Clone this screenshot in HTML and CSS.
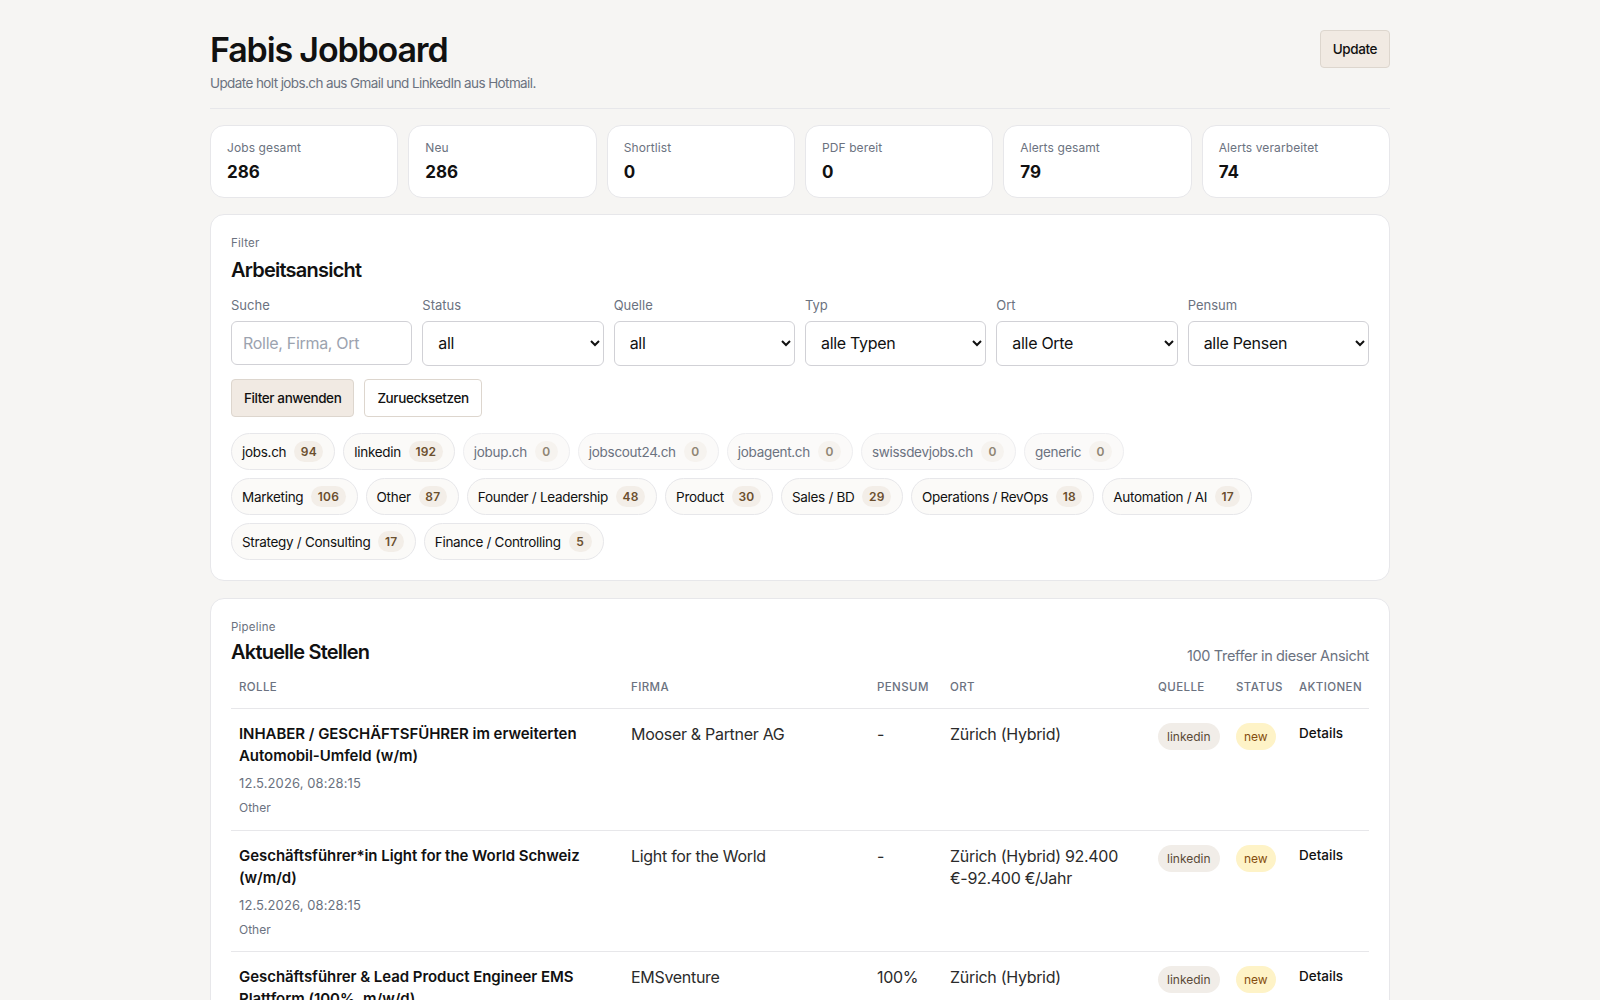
FILE: index.html
```html
<!DOCTYPE html>
<html lang="de">
<head>
  <meta charset="UTF-8">
  <title>Fabis Jobboard</title>
  <link rel="stylesheet" href="styles.css">
</head>
<body>
  <div class="container">
    <header class="header">
      <div>
        <h1>Fabis Jobboard</h1>
        <p class="subtitle">Update holt jobs.ch aus Gmail und LinkedIn aus Hotmail.</p>
      </div>
      <button class="btn btn-primary">Update</button>
    </header>

    <section class="stats">
      <div class="stat"><span class="stat-label">Jobs gesamt</span><strong class="stat-value">286</strong></div>
      <div class="stat"><span class="stat-label">Neu</span><strong class="stat-value">286</strong></div>
      <div class="stat"><span class="stat-label">Shortlist</span><strong class="stat-value">0</strong></div>
      <div class="stat"><span class="stat-label">PDF bereit</span><strong class="stat-value">0</strong></div>
      <div class="stat"><span class="stat-label">Alerts gesamt</span><strong class="stat-value">79</strong></div>
      <div class="stat"><span class="stat-label">Alerts verarbeitet</span><strong class="stat-value">74</strong></div>
    </section>

    <section class="panel">
      <div class="eyebrow">Filter</div>
      <h2>Arbeitsansicht</h2>
      <form class="filters">
        <label class="field">Suche<input type="text" placeholder="Rolle, Firma, Ort"></label>
        <label class="field">Status<select><option>all</option></select></label>
        <label class="field">Quelle<select><option>all</option></select></label>
        <label class="field">Typ<select><option>alle Typen</option></select></label>
        <label class="field">Ort<select><option>alle Orte</option></select></label>
        <label class="field">Pensum<select><option>alle Pensen</option></select></label>
      </form>
      <div class="actions">
        <button class="btn btn-primary">Filter anwenden</button>
        <button class="btn">Zuruecksetzen</button>
      </div>
      <div class="chips">
        <a class="chip">jobs.ch <b>94</b></a>
        <a class="chip">linkedin <b>192</b></a>
        <a class="chip empty">jobup.ch <b>0</b></a>
        <a class="chip empty">jobscout24.ch <b>0</b></a>
        <a class="chip empty">jobagent.ch <b>0</b></a>
        <a class="chip empty">swissdevjobs.ch <b>0</b></a>
        <a class="chip empty">generic <b>0</b></a>
      </div>
      <div class="chips">
        <a class="chip">Marketing <b>106</b></a>
        <a class="chip">Other <b>87</b></a>
        <a class="chip">Founder / Leadership <b>48</b></a>
        <a class="chip">Product <b>30</b></a>
        <a class="chip">Sales / BD <b>29</b></a>
        <a class="chip">Operations / RevOps <b>18</b></a>
        <a class="chip">Automation / AI <b>17</b></a>
      </div>
      <div class="chips">
        <a class="chip">Strategy / Consulting <b>17</b></a>
        <a class="chip">Finance / Controlling <b>5</b></a>
      </div>
    </section>

    <section class="panel">
      <div class="eyebrow">Pipeline</div>
      <div class="panel-head">
        <h2>Aktuelle Stellen</h2>
        <span class="count">100 Treffer in dieser Ansicht</span>
      </div>
      <table class="jobs">
        <thead>
          <tr>
            <th class="col-role">Rolle</th>
            <th class="col-company">Firma</th>
            <th class="col-load">Pensum</th>
            <th class="col-place">Ort</th>
            <th class="col-source">Quelle</th>
            <th class="col-status">Status</th>
            <th>Aktionen</th>
          </tr>
        </thead>
        <tbody>
          <tr>
            <td>
              <div class="role">INHABER / GESCHÄFTSFÜHRER im erweiterten Automobil-Umfeld (w/m)</div>
              <div class="date">12.5.2026, 08:28:15</div>
              <div class="type">Other</div>
            </td>
            <td>Mooser &amp; Partner AG</td>
            <td>-</td>
            <td>Zürich (Hybrid)</td>
            <td><span class="tag">linkedin</span></td>
            <td><span class="tag tag-new">new</span></td>
            <td><a class="details">Details</a></td>
          </tr>
          <tr>
            <td>
              <div class="role">Geschäftsführer*in Light for the World Schweiz (w/m/d)</div>
              <div class="date">12.5.2026, 08:28:15</div>
              <div class="type">Other</div>
            </td>
            <td>Light for the World</td>
            <td>-</td>
            <td>Zürich (Hybrid) 92.400 €-92.400 €/Jahr</td>
            <td><span class="tag">linkedin</span></td>
            <td><span class="tag tag-new">new</span></td>
            <td><a class="details">Details</a></td>
          </tr>
          <tr>
            <td>
              <div class="role">Geschäftsführer &amp; Lead Product Engineer EMS Plattform (100%, m/w/d)</div>
              <div class="date">12.5.2026, 08:28:15</div>
              <div class="type">Other</div>
            </td>
            <td>EMSventure</td>
            <td>100%</td>
            <td>Zürich (Hybrid)</td>
            <td><span class="tag">linkedin</span></td>
            <td><span class="tag tag-new">new</span></td>
            <td><a class="details">Details</a></td>
          </tr>
        </tbody>
      </table>
    </section>
  </div>
</body>
</html>
```

FILE: styles.css
```css
:root {
  --bg: #f6f5f3;
  --line: #e7e7ea;
  --text: #111111;
  --muted: #6b7280;
  --accent: #f1eae3;
  --accent-line: #ddd6ce;
}

* {
  margin: 0;
  padding: 0;
  box-sizing: border-box;
}

html, body {
  height: 100%;
  overflow: hidden;
}

body {
  font-family: Inter, "Noto Sans", sans-serif;
  background: var(--bg);
  color: var(--text);
}

.container {
  width: 1180px;
  margin: 0 auto;
  padding-top: 30px;
}

.header {
  display: flex;
  justify-content: space-between;
  align-items: flex-start;
  height: 79px;
  border-bottom: 1px solid var(--line);
  margin-bottom: 16px;
}

h1 {
  font-size: 34px;
  line-height: 40px;
  font-weight: 600;
  letter-spacing: -1.15px;
}

.subtitle {
  font-size: 13.5px;
  line-height: 20px;
  letter-spacing: -0.6px;
  color: var(--muted);
  margin-top: 3px;
}

.btn {
  font-family: inherit;
  font-size: 13.5px;
  font-weight: 500;
  letter-spacing: -0.4px;
  height: 38px;
  padding: 0 12px;
  border: 1px solid var(--accent-line);
  border-radius: 4px;
  background: #fff;
  color: var(--text);
  cursor: pointer;
}

.btn-primary {
  background: var(--accent);
}

.stats {
  display: grid;
  grid-template-columns: repeat(6, 1fr);
  gap: 10px;
  margin-bottom: 16px;
}

.stat {
  height: 73px;
  padding: 14px 16px;
  background: #fff;
  border: 1px solid var(--line);
  border-radius: 14px;
}

.stat-label {
  display: block;
  font-size: 12px;
  line-height: 16px;
  letter-spacing: 0.1px;
  color: var(--muted);
}

.stat-value {
  display: block;
  font-size: 17px;
  line-height: 24px;
  font-weight: 700;
  margin-top: 4px;
}

.panel {
  background: #fff;
  border: 1px solid var(--line);
  border-radius: 14px;
  padding: 20px;
  margin-bottom: 17px;
}

.eyebrow {
  font-size: 11.5px;
  line-height: 16px;
  letter-spacing: 0.2px;
  color: var(--muted);
}

h2 {
  font-size: 20px;
  line-height: 28px;
  font-weight: 600;
  letter-spacing: -0.77px;
  margin-top: 5px;
}

.filters {
  display: grid;
  grid-template-columns: repeat(6, 1fr);
  gap: 10px;
  margin-top: 13px;
}

.field {
  display: flex;
  flex-direction: column;
  gap: 8px;
  font-size: 13px;
  line-height: 16px;
  color: var(--muted);
}

.field input,
.field select {
  width: 100%;
  font-family: inherit;
  font-size: 16px;
  letter-spacing: -0.3px;
  color: var(--text);
  background: #fff;
  border: 1px solid #d1d1d6;
  border-radius: 6px;
}

.field input {
  height: 44px;
  padding: 0 11px;
}

.field input::placeholder {
  color: #9ca3af;
}

.field select {
  height: 45px;
  padding: 0 11px 2px;
}

.actions {
  display: flex;
  gap: 10px;
  margin-top: 13px;
}

.chips {
  display: flex;
  gap: 8px;
  margin-top: 8px;
}

.actions + .chips {
  margin-top: 16px;
}

.chip {
  display: inline-flex;
  align-items: center;
  gap: 8px;
  height: 37px;
  padding: 0 11px 0 10px;
  font-size: 13.5px;
  letter-spacing: -0.3px;
  background: #fbfaf8;
  border: 1px solid var(--line);
  border-radius: 19px;
}

.chip b {
  display: inline-block;
  min-width: 23px;
  padding: 0 6.5px;
  font-size: 12px;
  line-height: 21px;
  font-weight: 600;
  letter-spacing: 0.2px;
  text-align: center;
  color: #6b4f2e;
  background: #f3eee8;
  border-radius: 11px;
}

.chip.empty {
  color: var(--muted);
  background: #fbfaf9;
  border-color: #eeeef0;
}

.chip.empty b {
  color: #8f8574;
  background: #f6f3ef;
}

.panel-head {
  display: flex;
  justify-content: space-between;
  align-items: flex-end;
}

.panel-head h2 {
  margin-top: 3px;
}

.count {
  font-size: 14.5px;
  letter-spacing: -0.35px;
  color: var(--muted);
  padding-bottom: 2px;
}

.jobs {
  width: 100%;
  table-layout: fixed;
  border-collapse: collapse;
  margin-top: 5px;
}

.col-role { width: 392px; }
.col-company { width: 246px; }
.col-load { width: 73px; }
.col-place { width: 208px; }
.col-source { width: 78px; }
.col-status { width: 63px; }

.jobs th {
  padding: 8px 8px 12px;
  font-size: 11.5px;
  line-height: 17px;
  font-weight: 500;
  text-align: left;
  text-transform: uppercase;
  letter-spacing: 0.4px;
  color: var(--muted);
  border-bottom: 1px solid var(--line);
}

.jobs td {
  padding: 14px 8px 12.5px;
  font-size: 16px;
  line-height: 22px;
  letter-spacing: -0.3px;
  color: #2b2b2b;
  vertical-align: top;
  border-bottom: 1px solid var(--line);
}

.role {
  font-size: 15px;
  font-weight: 600;
  letter-spacing: -0.05px;
  color: var(--text);
}

.date {
  font-size: 13px;
  line-height: 20px;
  letter-spacing: 0.1px;
  color: var(--muted);
  margin-top: 6px;
}

.type {
  font-size: 12px;
  line-height: 18px;
  letter-spacing: 0;
  color: var(--muted);
  margin-top: 6px;
}

.tag {
  display: inline-block;
  padding: 0 9px;
  font-size: 12px;
  line-height: 27px;
  letter-spacing: 0;
  color: #5a4a36;
  background: #f1ede8;
  border-radius: 14px;
}

.tag-new {
  padding: 0 8px;
  color: #854d0e;
  background: #fef3c7;
}

.details {
  display: block;
  font-size: 13.5px;
  line-height: 20px;
  font-weight: 500;
  letter-spacing: 0;
  color: var(--text);
}
```
